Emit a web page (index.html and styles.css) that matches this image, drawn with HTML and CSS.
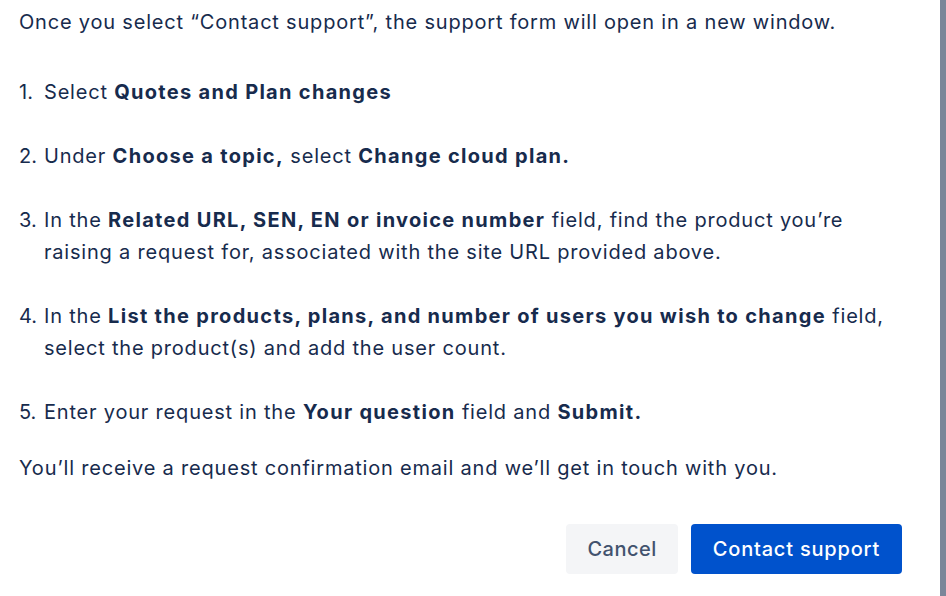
FILE: index.html
```html
<!DOCTYPE html>
<html lang="en">
<head>
<meta charset="utf-8">
<title>Contact support</title>
<link rel="stylesheet" href="styles.css">
</head>
<body>
<div class="page">
  <div class="content">
    <p class="intro">Once you select “Contact support”, the support form will open in a new window.</p>
    <ol class="steps">
      <li><span class="num">1.</span><span class="txt">Select <b>Quotes and Plan changes</b></span></li>
      <li><span class="num">2.</span><span class="txt">Under <b>Choose a topic,</b> select <b>Change cloud plan.</b></span></li>
      <li><span class="num">3.</span><span class="txt">In the <b>Related URL, SEN, EN or invoice number</b> field, find the product you’re raising a request for, associated with the site URL provided above.</span></li>
      <li><span class="num">4.</span><span class="txt">In the <b>List the products, plans, and number of users you wish to change</b> field, select the product(s) and add the user count.</span></li>
      <li><span class="num">5.</span><span class="txt">Enter your request in the <b>Your question</b> field and <b>Submit.</b></span></li>
    </ol>
    <p class="outro">You’ll receive a request confirmation email and we’ll get in touch with you.</p>
    <div class="footer">
      <button class="btn btn-subtle" type="button">Cancel</button>
      <button class="btn btn-primary" type="button">Contact support</button>
    </div>
  </div>
  <div class="scrollbar"></div>
</div>
</body>
</html>
```

FILE: styles.css
```css
html, body {
  margin: 0;
  padding: 0;
  background: #ffffff;
}
body {
  font-family: Inter, "Liberation Sans", sans-serif;
  font-size: 20px;
  line-height: 32px;
  letter-spacing: 0.8px;
  color: #172B4D;
}
.page {
  display: flex;
  height: 596px;
  overflow: hidden;
}
.content {
  flex: 1;
  padding: 6px 38px 0 19px;
}
.scrollbar {
  width: 6px;
  background: #7A8699;
}
.intro {
  margin: 0 0 38px;
}
.steps {
  list-style: none;
  margin: 0 0 24px;
  padding: 0;
}
.steps li {
  display: flex;
  margin-bottom: 32px;
}
.steps li:last-child {
  margin-bottom: 0;
}
.num {
  flex: 0 0 25px;
  letter-spacing: 0;
}
.txt {
  flex: 1;
}
b {
  font-weight: 700;
  letter-spacing: 1.3px;
}
.outro {
  margin: 0;
}
.footer {
  display: flex;
  justify-content: flex-end;
  gap: 13px;
  margin-top: 40px;
}
.btn {
  font-family: inherit;
  font-size: 20px;
  font-weight: 500;
  height: 50px;
  border: none;
  border-radius: 4px;
  cursor: pointer;
}
.btn-subtle {
  padding: 0 21px;
  letter-spacing: 0.5px;
  background: #F4F5F7;
  color: #42526E;
}
.btn-primary {
  padding: 0 22px;
  letter-spacing: 0.8px;
  background: #0052CC;
  color: #ffffff;
}
```
